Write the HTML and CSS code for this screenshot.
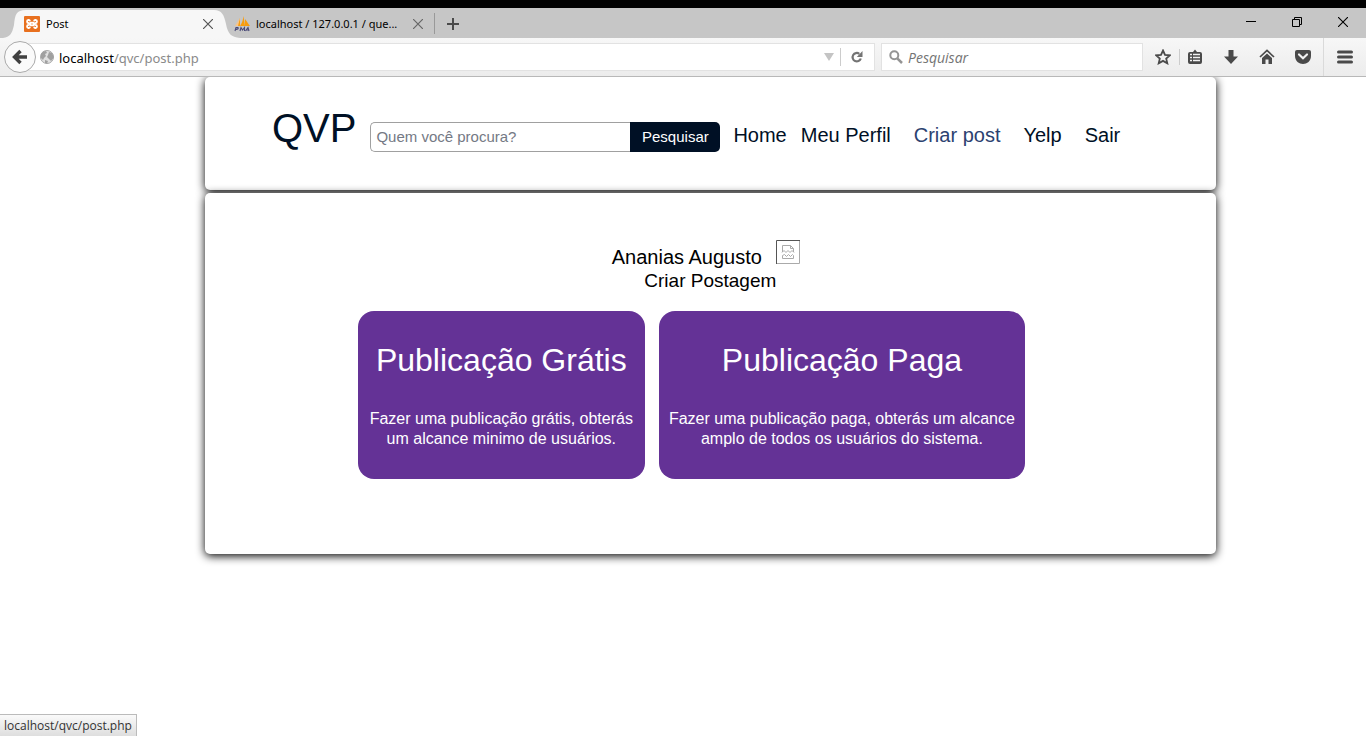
FILE: index.html
```html
<!DOCTYPE html>
<html lang="pt">
<head>
<meta charset="utf-8">
<title>Post</title>
<link rel="stylesheet" href="styles.css">
</head>
<body>
<div class="browser">
  <div class="tab-strip">
    <div class="tab tab-active">
      <svg class="tab-shape" width="240" height="30" viewBox="0 0 240 30" aria-hidden="true"><path d="M3 30C10 29 12 26 14 17C15 7 16 2 26 2H214C222 2 224 7 226 16C228 26 231 29 240 30Z" fill="#f7f7f7"/></svg>
      <svg class="favicon" width="16" height="16" viewBox="0 0 16 16" aria-hidden="true"><rect width="16" height="16" rx="1" fill="#e8701f"/><path d="M6.500 6.700H9.500V9.300H6.500ZM6 5.200A1.500 1.500 0 1 0 4.500 7L6.500 8L4.500 9A1.500 1.500 0 1 0 6 10.800M10 5.200A1.500 1.500 0 1 1 11.500 7L9.500 8L11.500 9A1.500 1.500 0 1 1 10 10.800" fill="none" stroke="#fff" stroke-width="1.800" stroke-linejoin="round"/></svg>
      <span class="tab-title">Post</span>
      <button class="icon-button" aria-label="Fechar Post"><svg width="10" height="10" viewBox="0 0 10 10"><path d="M0 0L10 10M10 0L0 10" stroke="#555" stroke-width="1.2"/></svg></button>
    </div>
    <div class="tab">
      <svg class="favicon" width="16" height="16" viewBox="0 0 16 16" aria-hidden="true"><path d="M2 10C4 8 5 5 6 2V10ZM6 10C8 7 9 4 9.500 0L11 10ZM11 10L11 3C13 5 14 8 16 10Z" fill="#f89c0e"/><path d="M1 10L6 2L4 10Z" fill="#f6c58b"/><path d="M1 15L2 11.500H4Q5 13 2 13.500M6 15L7 11.500L8.500 14L10.500 11.500V15M11.500 15L14 11.500L15 15M12 14H15" fill="none" stroke="#4a4a78" stroke-width="1.100"/></svg>
      <span class="tab-title">localhost / 127.0.0.1 / que...</span>
      <button class="icon-button" aria-label="Fechar localhost"><svg width="10" height="10" viewBox="0 0 10 10"><path d="M0 0L10 10M10 0L0 10" stroke="#666" stroke-width="1.2"/></svg></button>
    </div>
    <button class="icon-button new-tab" aria-label="Nova aba"><svg width="12" height="12" viewBox="0 0 12 12"><path d="M6 0V12M0 6H12" stroke="#4a4a4a" stroke-width="2"/></svg></button>
    <div class="window-controls">
      <button class="icon-button" aria-label="Minimizar"><svg width="10" height="10" viewBox="0 0 10 10"><path d="M0 4.500H10" stroke="#000"/></svg></button>
      <button class="icon-button" aria-label="Restaurar"><svg width="10" height="10" viewBox="0 0 10 10"><path d="M.5 2.500H7.500V9.500H.5ZM2.500 2.500V.5H9.500V7.500H7.500" fill="none" stroke="#000"/></svg></button>
      <button class="icon-button" aria-label="Fechar"><svg width="10" height="10" viewBox="0 0 10 10"><path d="M0 0L10 10M10 0L0 10" stroke="#000" stroke-width="1.100"/></svg></button>
    </div>
  </div>
  <div class="toolbar">
    <button class="back" aria-label="Voltar"><svg width="16" height="16" viewBox="0 0 16 16"><path d="M15 8H3M8.500 2L2.500 8L8.500 14" fill="none" stroke="#404040" stroke-width="3.400"/></svg></button>
    <div class="address">
      <svg class="globe" width="14" height="14" viewBox="0 0 14 14" aria-hidden="true"><circle cx="7" cy="7" r="6.500" fill="#e0e0e0" stroke="#a8a8a8"/><path d="M1 4L3 1.500L6 1L7 3L5 4L6 6L4 8L3 10L1 8ZM8 5L9 2L12 3L13.500 6V8L11 11L9 9L7 7ZM5 10L8 11L7 13.500L5 13Z" fill="#a0a0a0"/></svg>
      <a class="url" href="#"><span class="host">localhost</span>/qvc/post.php</a>
      <button class="icon-button history" aria-label="Histórico"><svg width="10" height="8" viewBox="0 0 10 8"><path d="M0 0H10L5 8Z" fill="#c4c4c4"/></svg></button>
      <button class="icon-button reload" aria-label="Recarregar"><svg width="12" height="12" viewBox="0 0 12 12"><path d="M9.800 7.500A4.200 4.200 0 1 1 8.300 2.800" fill="none" stroke="#747474" stroke-width="2.200"/><path d="M11.500 0V6H5.800Z" fill="#747474"/></svg></button>
    </div>
    <label class="web-search">
      <svg width="14" height="14" viewBox="0 0 14 14" aria-hidden="true"><circle cx="5.300" cy="5.300" r="4" fill="none" stroke="#949494" stroke-width="2"/><path d="M8.300 8.300L13 13" stroke="#949494" stroke-width="2.500"/></svg>
      <input class="web-search-input" type="text" placeholder="Pesquisar" aria-label="Pesquisar na web">
    </label>
    <div class="tools">
      <button class="icon-button" aria-label="Favoritar"><svg width="16" height="16" viewBox="0 0 16 16"><path d="M8 1.500L10 5.800L14.800 6.300L11.200 9.600L12.300 14.300L8 11.900L3.700 14.300L4.800 9.600L1.200 6.300L6 5.800Z" fill="none" stroke="#4a4a4a" stroke-width="1.800"/></svg></button>
      <button class="icon-button bookmarks" aria-label="Favoritos"><svg width="16" height="16" viewBox="0 0 16 16"><path d="M3 3H6L8 .5L10 3H13Q15 3 15 5V13Q15 15 13 15H3Q1 15 1 13V5Q1 3 3 3Z" fill="#4a4a4a"/><path d="M3 5.500H5M6 5.500H13M3 8.500H5M6 8.500H13M3 11.500H5M6 11.500H13" stroke="#f2f2f2" stroke-width="1.700"/></svg></button>
      <button class="icon-button" aria-label="Downloads"><svg width="16" height="16" viewBox="0 0 16 16"><path d="M5.500 1H10.500V7.500H15L8 15L1 7.500H5.500Z" fill="#4a4a4a"/></svg></button>
      <button class="icon-button" aria-label="Página inicial"><svg width="16" height="16" viewBox="0 0 16 16"><path d="M1 8L8 1.500L15 8" fill="none" stroke="#4a4a4a" stroke-width="1.700"/><path d="M3 9L8 4.500L13 9V15H9.500V10.500H6.500V15H3Z" fill="#4a4a4a"/></svg></button>
      <button class="icon-button" aria-label="Pocket"><svg width="16" height="16" viewBox="0 0 16 16"><path d="M2 1H14Q16 1 16 3V7C16 12 12 15 8 15S0 12 0 7V3Q0 1 2 1Z" fill="#4a4a4a"/><path d="M4 5.500L8 9.300L12 5.500" fill="none" stroke="#f2f2f2" stroke-width="2.200" stroke-linecap="round"/></svg></button>
      <button class="icon-button menu" aria-label="Menu"><svg width="16" height="14" viewBox="0 0 16 14"><path d="M1.500 2H14.500M1.500 7H14.500M1.500 12H14.500" stroke="#4a4a4a" stroke-width="3" stroke-linecap="round"/></svg></button>
    </div>
  </div>
</div>

<div class="page">
  <header class="panel site-header">
    <a class="brand" href="#">QVP</a>
    <form class="search">
      <input class="search-input" type="text" placeholder="Quem você procura?" aria-label="Quem você procura?">
      <button class="search-button" type="button">Pesquisar</button>
    </form>
    <nav class="nav">
      <a class="nav-link nav-home" href="#">Home</a>
      <a class="nav-link" href="#">Meu Perfil</a>
      <a class="nav-link nav-current" href="#">Criar post</a>
      <a class="nav-link" href="#">Yelp</a>
      <a class="nav-link" href="#">Sair</a>
    </nav>
  </header>
  <main class="panel content">
    <div class="user">
      <span class="user-name">Ananias Augusto</span>
      <svg class="avatar" width="24" height="24" viewBox="0 0 24 24" role="img" aria-label="Foto"><path d="M.5 24V.5H24" fill="none" stroke="#555"/><path d="M1 23.500H23.500V1" fill="none" stroke="#aaa"/><path d="M6.500 12V5.500H14.500L17.500 8.500V12M14.500 5.500V8.500H17.500M6 12.500L8 10.500L10 12.500L12 10.500L14 12.500L16 10.500L18 12.500M6.500 18.500V15.500L8.500 14.500L10.500 16.500L12.500 14.500L14.500 16.500L16.500 14.500L17.500 15.500V18.500Z" fill="none" stroke="#aaa"/></svg>
    </div>
    <h1 class="page-title">Criar Postagem</h1>
    <div class="cards">
      <a class="card" href="#">
        <h2 class="card-title">Publicação Grátis</h2>
        <p class="card-text">Fazer uma publicação grátis, obterás<br>um alcance minimo de usuários.</p>
      </a>
      <a class="card card-paid" href="#">
        <h2 class="card-title">Publicação Paga</h2>
        <p class="card-text">Fazer uma publicação paga, obterás um alcance<br>amplo de todos os usuários do sistema.</p>
      </a>
    </div>
  </main>
</div>
<div class="status">localhost/qvc/post.php</div>
</body>
</html>
```
FILE: styles.css
```css
* { box-sizing: border-box; }
body {
  margin: 0;
  min-height: 100vh;
  background: #fff;
  font-family: "Liberation Sans", Arial, sans-serif;
  color: #000;
}
a { text-decoration: none; color: inherit; }
button, input { font: inherit; margin: 0; padding: 0; border: 0; background: none; }
svg { display: block; flex: none; }
h1, h2, p { margin: 0; font-weight: 400; }

.browser {
  position: relative;
  z-index: 1;
  border-top: 8px solid #000;
  font-family: "Noto Sans", "Open Sans", sans-serif;
  font-size: 12px;
}
.icon-button { display: flex; align-items: center; justify-content: center; flex: none; }
.tab-strip { display: flex; align-items: stretch; height: 30px; background: #c6c6c6; }
.tab {
  position: relative;
  display: flex;
  align-items: center;
  gap: 6px;
  width: 207px;
  padding: 2px 11px 0 6px;
}
.tab:not(.tab-active) { border-right: 1px solid #999; margin: 5px 0 4px; padding-top: 0; }
.tab-active { width: 228px; padding-left: 24px; padding-right: 15px; }
.tab-shape { position: absolute; left: 0; top: 0; }
.favicon, .tab-title, .tab .icon-button { position: relative; }
.tab-title { flex: 1; white-space: nowrap; font-size: 11px; line-height: 16px; }
.new-tab { padding: 2px 12px 0; }
.window-controls { display: flex; gap: 36px; margin-left: auto; padding: 0 18px 2px 0; }

.toolbar {
  display: flex;
  align-items: center;
  height: 39px;
  background: linear-gradient(#f7f7f7, #ececec);
  border-bottom: 1px solid #b8b8b8;
}
.back {
  display: flex;
  align-items: center;
  justify-content: center;
  position: relative;
  z-index: 1;
  width: 32px;
  height: 32px;
  margin-left: 4px;
  border: 1px solid #aaa;
  border-radius: 50%;
  background: #fafafa;
}
.address, .web-search {
  display: flex;
  align-items: center;
  height: 28px;
  background: #fff;
  border: 1px solid #e2e2e2;
}
.address { flex: 1; margin-left: -12px; padding-left: 15px; }
.url { flex: 1; margin-left: 5px; padding-top: 1px; color: #8a8a8a; font-size: 13px; line-height: 18px; }
.host { color: #000; }
.history { margin-right: 6px; }
.reload { width: 34px; height: 18px; padding-right: 2px; border-left: 1px solid #ccc; }
.web-search { width: 262px; margin-left: 6px; padding-left: 7px; gap: 5px; }
.web-search-input { flex: 1; min-width: 0; padding-top: 1px; font-family: "Open Sans", sans-serif; font-size: 14px; font-style: italic; outline: 0; }
.web-search-input::placeholder { color: #747474; opacity: 1; }
.tools { display: flex; align-items: center; gap: 20px; padding: 0 13px 0 12px; align-self: stretch; }
.bookmarks { margin-left: -12px; padding-left: 7px; height: 16px; border-left: 1px solid #ccc; }
.menu { align-self: stretch; margin: 0 -8px; padding: 0 8px 0 13px; border-left: 1px solid #dadada; }

.page { width: 74%; margin-left: 15%; }
.panel { background: #fff; border-radius: 5px; box-shadow: 0 2px 10px #000; }
.site-header {
  display: flex;
  align-items: flex-start;
  min-height: 113px;
  padding: 28px 67px 38px;
  color: #001025;
}
.brand { font-size: 40px; line-height: 46px; }
.search { display: flex; margin: 17px 13px 0 14px; height: 30px; font-size: 15px; }
.search-input {
  width: 260px;
  padding: 0 5px 2px;
  border: 1px solid #a0a0a0;
  border-right: 0;
  border-radius: 5px 0 0 5px;
  background: #fff;
}
.search-input::placeholder { color: #747984; opacity: 1; }
.search-button { width: 90px; padding-bottom: 2px; border-radius: 0 5px 5px 0; background: #001025; color: #fff; }
.nav { display: flex; gap: 23px; margin-top: 18px; font-size: 20px; line-height: 24px; white-space: nowrap; }
.nav-home { margin-right: -9px; }
.nav-current { color: #2c4270; }

.content { margin-top: 3px; min-height: 361px; padding: 47px 0 75px; }
.user { display: flex; justify-content: center; align-items: flex-start; gap: 14px; padding-right: 9px; }
.user-name { margin-top: 4px; font-size: 20px; line-height: 26px; }
.page-title { font-size: 19px; line-height: 22px; text-align: center; }
.cards { display: flex; justify-content: center; gap: 14px; margin-top: 19px; padding-right: 38px; }
.card { padding: 30px 12px; border-radius: 16px; background: #643296; color: #fff; text-align: center; }
.card-paid { padding: 30px 10px; }
.card-title { font-size: 32px; line-height: 38px; }
.card-text { margin-top: 30px; font-size: 16px; line-height: 20px; white-space: nowrap; }

.status {
  position: fixed;
  left: 0;
  bottom: 0;
  padding: 2px 4px 1px;
  border: 1px solid #bbb;
  border-width: 1px 1px 0 0;
  background: linear-gradient(#fafafa, #dedede);
  font-family: "Open Sans", sans-serif;
  font-size: 12px;
  line-height: 18px;
  color: #333;
}
```
